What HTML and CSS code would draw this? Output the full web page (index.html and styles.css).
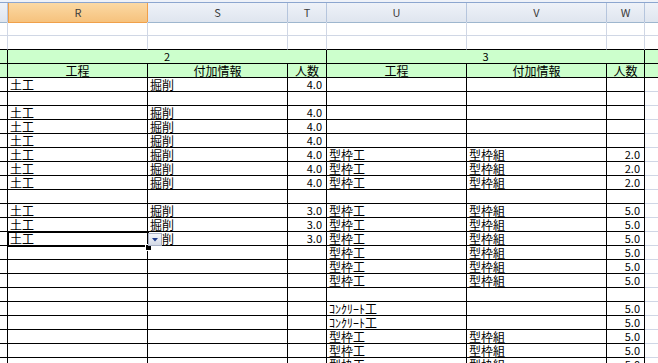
FILE: index.html
```html
<!DOCTYPE html>
<html lang="ja">
<head>
<meta charset="utf-8">
<link rel="stylesheet" href="styles.css">
</head>
<body>
<div class="sheet">
  <div class="topbar"></div>
  <div class="row hdr">
    <div class="h"></div>
    <div class="h on">R</div>
    <div class="h">S</div>
    <div class="h">T</div>
    <div class="h">U</div>
    <div class="h">V</div>
    <div class="h">W</div>
    <div class="h last"></div>
  </div>
  <div class="row">
    <div class="c"></div><div class="c"></div><div class="c"></div><div class="c"></div><div class="c"></div><div class="c"></div><div class="c"></div><div class="c x"></div>
  </div>
  <div class="row bk">
    <div class="c"></div><div class="c"></div><div class="c"></div><div class="c"></div><div class="c"></div><div class="c"></div><div class="c"></div><div class="c x"></div>
  </div>
  <div class="row g">
    <div class="c"></div><div class="c m">2</div><div class="c m">3</div><div class="c x"></div>
  </div>
  <div class="row g">
    <div class="c"></div><div class="c ctr">工程</div><div class="c ctr">付加情報</div><div class="c ctr">人数</div><div class="c ctr">工程</div><div class="c ctr">付加情報</div><div class="c ctr">人数</div><div class="c x"></div>
  </div>

  <div class="row t"><div class="c"></div><div class="c">土工</div><div class="c">掘削</div><div class="c num">4.0</div><div class="c"></div><div class="c"></div><div class="c num"></div><div class="c x"></div></div>
  <div class="row t"><div class="c"></div><div class="c"></div><div class="c"></div><div class="c num"></div><div class="c"></div><div class="c"></div><div class="c num"></div><div class="c x"></div></div>
  <div class="row t"><div class="c"></div><div class="c">土工</div><div class="c">掘削</div><div class="c num">4.0</div><div class="c"></div><div class="c"></div><div class="c num"></div><div class="c x"></div></div>
  <div class="row t"><div class="c"></div><div class="c">土工</div><div class="c">掘削</div><div class="c num">4.0</div><div class="c"></div><div class="c"></div><div class="c num"></div><div class="c x"></div></div>
  <div class="row t"><div class="c"></div><div class="c">土工</div><div class="c">掘削</div><div class="c num">4.0</div><div class="c"></div><div class="c"></div><div class="c num"></div><div class="c x"></div></div>
  <div class="row t"><div class="c"></div><div class="c">土工</div><div class="c">掘削</div><div class="c num">4.0</div><div class="c">型枠工</div><div class="c">型枠組</div><div class="c num">2.0</div><div class="c x"></div></div>
  <div class="row t"><div class="c"></div><div class="c">土工</div><div class="c">掘削</div><div class="c num">4.0</div><div class="c">型枠工</div><div class="c">型枠組</div><div class="c num">2.0</div><div class="c x"></div></div>
  <div class="row t"><div class="c"></div><div class="c">土工</div><div class="c">掘削</div><div class="c num">4.0</div><div class="c">型枠工</div><div class="c">型枠組</div><div class="c num">2.0</div><div class="c x"></div></div>
  <div class="row t"><div class="c"></div><div class="c"></div><div class="c"></div><div class="c num"></div><div class="c"></div><div class="c"></div><div class="c num"></div><div class="c x"></div></div>
  <div class="row t"><div class="c"></div><div class="c">土工</div><div class="c">掘削</div><div class="c num">3.0</div><div class="c">型枠工</div><div class="c">型枠組</div><div class="c num">5.0</div><div class="c x"></div></div>
  <div class="row t"><div class="c"></div><div class="c">土工</div><div class="c">掘削</div><div class="c num">3.0</div><div class="c">型枠工</div><div class="c">型枠組</div><div class="c num">5.0</div><div class="c x"></div></div>
  <div class="row t"><div class="c"></div><div class="c sel">土工<span class="selbox"></span><span class="handle"></span><span class="dd"><svg width="12" height="11" viewBox="0 0 12 11"><path d="M3 4h6l-3 3.5z" fill="#1c3a8c"/></svg></span></div><div class="c">掘削</div><div class="c num">3.0</div><div class="c">型枠工</div><div class="c">型枠組</div><div class="c num">5.0</div><div class="c x"></div></div>
  <div class="row t"><div class="c"></div><div class="c"></div><div class="c"></div><div class="c num"></div><div class="c">型枠工</div><div class="c">型枠組</div><div class="c num">5.0</div><div class="c x"></div></div>
  <div class="row t"><div class="c"></div><div class="c"></div><div class="c"></div><div class="c num"></div><div class="c">型枠工</div><div class="c">型枠組</div><div class="c num">5.0</div><div class="c x"></div></div>
  <div class="row t"><div class="c"></div><div class="c"></div><div class="c"></div><div class="c num"></div><div class="c">型枠工</div><div class="c">型枠組</div><div class="c num">5.0</div><div class="c x"></div></div>
  <div class="row t"><div class="c"></div><div class="c"></div><div class="c"></div><div class="c num"></div><div class="c"></div><div class="c"></div><div class="c num"></div><div class="c x"></div></div>
  <div class="row t"><div class="c"></div><div class="c"></div><div class="c"></div><div class="c num"></div><div class="c">ｺﾝｸﾘｰﾄ工</div><div class="c"></div><div class="c num">5.0</div><div class="c x"></div></div>
  <div class="row t"><div class="c"></div><div class="c"></div><div class="c"></div><div class="c num"></div><div class="c">ｺﾝｸﾘｰﾄ工</div><div class="c"></div><div class="c num">5.0</div><div class="c x"></div></div>
  <div class="row t"><div class="c"></div><div class="c"></div><div class="c"></div><div class="c num"></div><div class="c">型枠工</div><div class="c">型枠組</div><div class="c num">5.0</div><div class="c x"></div></div>
  <div class="row t"><div class="c"></div><div class="c"></div><div class="c"></div><div class="c num"></div><div class="c">型枠工</div><div class="c">型枠組</div><div class="c num">5.0</div><div class="c x"></div></div>
  <div class="row t"><div class="c"></div><div class="c"></div><div class="c"></div><div class="c num"></div><div class="c">型枠工</div><div class="c">型枠組</div><div class="c num">5.0</div><div class="c x"></div></div>
</div>
</body>
</html>
```
FILE: styles.css
```css
html, body {
  margin: 0;
  padding: 0;
  background: #fff;
  overflow: hidden;
}
body {
  font-family: "Noto Sans CJK JP", sans-serif;
  font-size: 12px;
  color: #000;
}
.sheet {
  width: 658px;
  height: 363px;
  overflow: hidden;
}
.topbar {
  height: 2px;
  background: #eef2f9;
  border-bottom: 1px solid #8ca6cf;
}
.row {
  display: grid;
  grid-template-columns: 8px 140px 140px 39px 140px 140px 38px 13px;
  height: 14px;
}
.row.hdr {
  height: 19px;
}
.h {
  box-sizing: border-box;
  border-right: 1px solid #b5c5dd;
  border-bottom: 1px solid #9eb6ce;
  background: linear-gradient(#eef2f8, #dfe5ef);
  text-align: center;
  font-size: 11px;
  line-height: 19px;
  color: #3c3c3c;
}
.h.on {
  background: linear-gradient(#fbd9a4, #f6c27d);
  border-right-color: #f0a04a;
  border-bottom-color: #f0a04a;
  border-left: 1px solid #f0a04a;
}
.h.last {
  border-right: none;
}
.c {
  box-sizing: border-box;
  border-right: 1px solid #d0d7e5;
  border-bottom: 1px solid #d0d7e5;
  line-height: 13px;
  padding-left: 2px;
  white-space: nowrap;
}
.c.x {
  border-right: none;
}
.row.bk .c {
  border-bottom-color: #000;
}
.row.g .c {
  background: #ccffcc;
  border-color: #000;
}
.row.g .c.x {
  border-right: none;
}
.c.m {
  grid-column: span 3;
  text-align: center;
  font-size: 11px;
  padding-left: 0;
}
.c.ctr {
  text-align: center;
  padding-left: 0;
}
.row.t .c {
  border-color: #000;
}
.row.t .c.x {
  border-bottom-color: #d0d7e5;
}
.c.num {
  text-align: right;
  padding-left: 0;
  padding-right: 4px;
  font-size: 11px;
}
.c.sel {
  position: relative;
}
.selbox {
  position: absolute;
  left: -1px;
  top: -1px;
  right: -2px;
  bottom: -2px;
  border: 2px solid #000;
  z-index: 3;
}
.handle {
  position: absolute;
  left: 138px;
  top: 13px;
  width: 5px;
  height: 5px;
  background: #000;
  box-shadow: 0 0 0 1px #fff;
  z-index: 4;
}
.dd {
  position: absolute;
  left: 140px;
  top: 1px;
  width: 14px;
  height: 13px;
  box-sizing: border-box;
  border: 1px solid #a9b1c6;
  background: linear-gradient(#f4f6fb, #d3d9e6);
  z-index: 5;
  display: flex;
  align-items: center;
  justify-content: center;
}
.dd svg {
  display: block;
}
```
